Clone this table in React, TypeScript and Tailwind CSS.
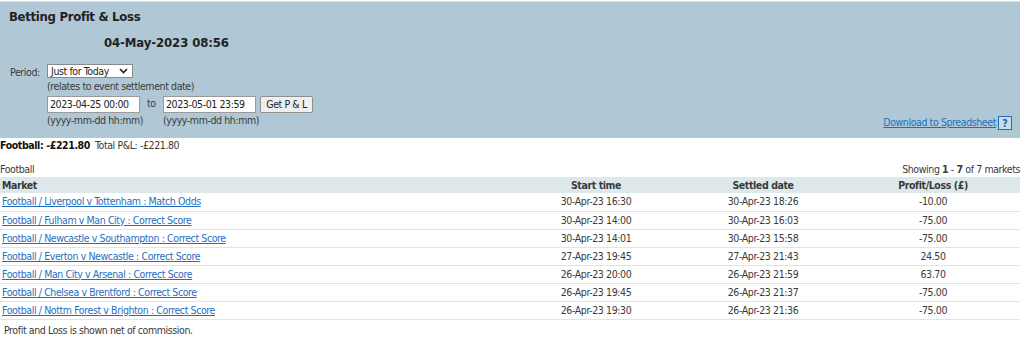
import React from 'react';

interface Row {
  market: string;
  start: string;
  settled: string;
  pl: string;
}

const rows: Row[] = [
  { market: 'Football / Liverpool v Tottenham : Match Odds', start: '30-Apr-23 16:30', settled: '30-Apr-23 18:26', pl: '-10.00' },
  { market: 'Football / Fulham v Man City : Correct Score', start: '30-Apr-23 14:00', settled: '30-Apr-23 16:03', pl: '-75.00' },
  { market: 'Football / Newcastle v Southampton : Correct Score', start: '30-Apr-23 14:01', settled: '30-Apr-23 15:58', pl: '-75.00' },
  { market: 'Football / Everton v Newcastle : Correct Score', start: '27-Apr-23 19:45', settled: '27-Apr-23 21:43', pl: '24.50' },
  { market: 'Football / Man City v Arsenal : Correct Score', start: '26-Apr-23 20:00', settled: '26-Apr-23 21:59', pl: '63.70' },
  { market: 'Football / Chelsea v Brentford : Correct Score', start: '26-Apr-23 19:45', settled: '26-Apr-23 21:37', pl: '-75.00' },
  { market: 'Football / Nottm Forest v Brighton : Correct Score', start: '26-Apr-23 19:30', settled: '26-Apr-23 21:36', pl: '-75.00' },
];

export default function App() {
  return (
    <div className="w-[1024px] h-[346px] bg-white text-[#3a3a3a] text-[10.5px] leading-[13px] tracking-[-0.4px] whitespace-nowrap font-['DejaVu_Sans_Condensed','Liberation_Sans',sans-serif]">
      <div className="w-[1020px] pt-px">
        {/* header panel */}
        <div className="bg-[#b0c7d6] border-t border-[#d6e2ea] h-[137px] flex flex-col">
          <div className="pl-[9px] pt-[7px] text-[13px] leading-[16px] tracking-[-0.3px] font-bold text-[#222]">Betting Profit &amp; Loss</div>
          <div className="pl-[104px] pt-[10px] text-[13px] leading-[16px] tracking-[-0.1px] font-bold text-[#222]">04-May-2023 08:56</div>
          <div className="flex pl-[10px] pt-[13px]">
            <div className="w-[37px] pt-[2px]">Period:</div>
            <div className="flex flex-col">
              <div className="w-[86px] h-[14px] bg-white border border-[#8a8a8a] flex items-center justify-between pl-[3px] pr-[4px] text-[#222]">
                <span>Just for Today</span>
                <svg width="9" height="6" viewBox="0 0 9 6"><path d="M1 1l3.5 3.5L8 1" fill="none" stroke="#222" strokeWidth="1.6" /></svg>
              </div>
              <div className="pt-[2px]">(relates to event settlement date)</div>
              <div className="flex items-start pt-[3px]">
                <div className="w-[93px] flex flex-col">
                  <div className="w-[93px] h-[17px] bg-white border border-[#9a9a9a] pl-[2px] flex items-center text-[#222]">2023-04-25 00:00</div>
                  <div className="pt-[1px]">(yyyy-mm-dd hh:mm)</div>
                </div>
                <div className="w-[23px] pl-[7px] pt-[1px]">to</div>
                <div className="w-[93px] flex flex-col">
                  <div className="w-[93px] h-[17px] bg-white border border-[#9a9a9a] pl-[2px] flex items-center text-[#222]">2023-05-01 23:59</div>
                  <div className="pt-[1px]">(yyyy-mm-dd hh:mm)</div>
                </div>
                <div className="ml-[4px] w-[53px] h-[17px] bg-[#efefef] border border-[#8f8f8f] rounded-[2px] flex items-center justify-center text-[#222]">Get P &amp; L</div>
              </div>
            </div>
            <div className="flex-1 flex items-end justify-end pr-[8px] -mb-[3px]">
              <a className="text-[#1f6fbf] underline mb-[1px]">Download to Spreadsheet</a>
              <span className="ml-[2px] w-[14px] h-[14px] border border-[#1f6fbf] bg-[#c8dcea] text-[#1f5f9f] font-bold flex items-center justify-center leading-none tracking-normal">?</span>
            </div>
          </div>
        </div>

        <div className="pt-px flex items-baseline">
          <span className="font-bold text-[#111]">Football: -£221.80</span>
          <span className="ml-[5px]">Total P&amp;L: -£221.80</span>
        </div>

        <div className="pt-[11px] flex justify-between">
          <span>Football</span>
          <span>Showing <b>1</b> - <b>7</b> of 7 markets</span>
        </div>

        <table className="w-[1020px] border-collapse mt-px">
          <thead>
            <tr className="bg-[#dce8ea] h-[16px]">
              <th className="text-left pl-[2px] font-bold p-0">Market</th>
              <th className="w-[168px] font-bold p-0">Start time</th>
              <th className="w-[166px] font-bold p-0">Settled date</th>
              <th className="w-[174px] font-bold p-0">Profit/Loss (£)</th>
            </tr>
          </thead>
          <tbody>
            {rows.map((r) => (
              <tr key={r.market} className="h-[18px] border-b border-[#e3e3e3]">
                <td className="pl-[2px] p-0">
                  <a className="text-[#1f6fbf] underline">{r.market}</a>
                </td>
                <td className="text-center p-0">{r.start}</td>
                <td className="text-center p-0">{r.settled}</td>
                <td className="text-center p-0">{r.pl}</td>
              </tr>
            ))}
          </tbody>
        </table>

        <div className="pl-[4px] pt-[4px]">Profit and Loss is shown net of commission.</div>
      </div>
    </div>
  );
}
